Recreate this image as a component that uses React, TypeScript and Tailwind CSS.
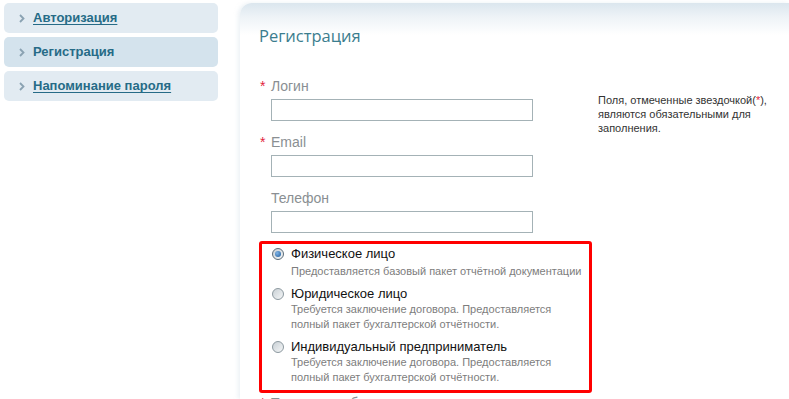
import React from "react";

const sans = { fontFamily: '"Liberation Sans", Arial, sans-serif' };

function Chevron() {
  return (
    <svg width="6" height="9" viewBox="0 0 6 9" className="shrink-0">
      <path d="M1 1 L4.5 4.5 L1 8" stroke="#8aa2b2" strokeWidth="1.8" fill="none" />
    </svg>
  );
}

function SideItem({ label, active, link }: { label: string; active?: boolean; link?: boolean }) {
  return (
    <div
      className={`h-[30px] w-[214px] rounded-[5px] flex items-center gap-[8px] pl-[15px] ${
        active ? "bg-[#d4e3ed]" : "bg-[#e2ebf2]"
      }`}
    >
      <Chevron />
      <span
        className={`text-[13px] font-bold text-[#266b87] ${link ? "underline underline-offset-2" : ""}`}
        style={sans}
      >
        {label}
      </span>
    </div>
  );
}

function Field({ label, required }: { label: string; required?: boolean }) {
  return (
    <div className="flex flex-col">
      <div className="flex items-center h-[18px] mb-[4px]">
        <span className="w-[12px] text-[14px] text-[#e2233c] leading-[18px] pl-[1px]">{required ? "*" : ""}</span>
        <span className="text-[14px] text-[#8a8f93] leading-[18px]" style={sans}>
          {label}
        </span>
      </div>
      <div className="ml-[12px] w-[262px] h-[22px] border border-[#a4b2b6] bg-white" />
    </div>
  );
}

function Radio({ checked }: { checked?: boolean }) {
  return (
    <div
      className={`w-[12px] h-[12px] rounded-full border ${
        checked ? "border-[#5a6b78]" : "border-[#8c989f]"
      } bg-[linear-gradient(135deg,#c9d0d5,#f4f6f7)] flex items-center justify-center shrink-0`}
    >
      {checked && <div className="w-[6px] h-[6px] rounded-full bg-[radial-gradient(circle_at_35%_35%,#7fb4e6,#1f5c9c)]" />}
    </div>
  );
}

function Option({ title, desc, checked, first }: { title: string; desc: string[]; checked?: boolean; first?: boolean }) {
  return (
    <div className="flex flex-col">
      <div className="flex items-center h-[16px]">
        <div className="w-[29px] pl-[10px] flex items-center">
          <Radio checked={checked} />
        </div>
        <span className="text-[13px] text-[#111]" style={sans}>
          {title}
        </span>
      </div>
      <div className={`pl-[29px] flex flex-col ${first ? "mt-[2px]" : ""}`}>
        {desc.map((d, i) => (
          <span key={i} className="text-[11px] leading-[15px] text-[#7d7d7d]" style={sans}>
            {d}
          </span>
        ))}
      </div>
    </div>
  );
}

export default function App() {
  return (
    <div className="w-[789px] h-[399px] overflow-hidden bg-white flex" style={sans}>
      <div className="w-[240px] shrink-0 pl-[4px] pt-[3px] flex flex-col gap-[4px]">
        <SideItem label="Авторизация" link />
        <SideItem label="Регистрация" active />
        <SideItem label="Напоминание пароля" link />
      </div>
      <div className="flex-1 mt-[3px] rounded-tl-[12px] bg-[linear-gradient(to_bottom,#dbe6ee_0px,#eef3f7_14px,#ffffff_32px)] shadow-[-2px_0_4px_rgba(200,215,225,0.35)] pl-[19px] pt-[21px]">
        <div className="text-[16.5px] leading-[24px] text-[#3b7d8e]" style={{ fontFamily: '"Open Sans", "Liberation Sans", sans-serif' }}>
          Регистрация
        </div>
        <div className="flex mt-[29px]">
          <div className="w-[333px] shrink-0 flex flex-col">
            <div className="flex flex-col gap-[12px]">
              <Field label="Логин" required />
              <Field label="Email" required />
              <Field label="Телефон" />
            </div>
            <div className="mt-[8px] h-[152px] border-[3px] border-[#ff0000] rounded-[3px] pt-[2px] flex flex-col gap-[7px]">
              <Option first checked title="Физическое лицо" desc={["Предоставляется базовый пакет отчётной документации"]} />
              <Option
                title="Юридическое лицо"
                desc={["Требуется заключение договора. Предоставляется", "полный пакет бухгалтерской отчётности."]}
              />
              <Option
                title="Индивидуальный предприниматель"
                desc={["Требуется заключение договора. Предоставляется", "полный пакет бухгалтерской отчётности."]}
              />
            </div>
            <div className="flex items-center h-[18px] mt-[1px]">
              <span className="w-[12px] text-[14px] text-[#e2233c] pl-[1px]">*</span>
              <span className="text-[14px] text-[#8a8f93]">Тип налогообложения</span>
            </div>
          </div>
          <div className="ml-[6px] mt-[16px] text-[11px] leading-[14px] text-[#333] w-[190px]">
            <p>Поля, отмеченные звездочкой(<span className="text-[#e2233c]">*</span>),</p>
            <p>являются обязательными для</p>
            <p>заполнения.</p>
          </div>
        </div>
      </div>
    </div>
  );
}
